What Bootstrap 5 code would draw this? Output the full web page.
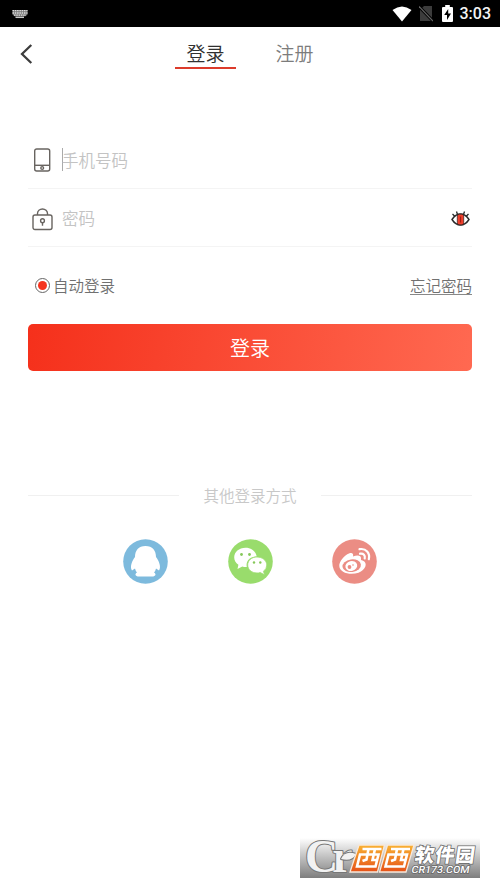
<!DOCTYPE html>
<html lang="zh-CN">
<head>
<meta charset="utf-8">
<meta name="viewport" content="width=device-width, initial-scale=1">
<title>登录</title>
<link href="https://cdn.jsdelivr.net/npm/bootstrap@5.3.0/dist/css/bootstrap.min.css" rel="stylesheet">
<style>
body{font-family:"Noto Sans CJK SC",sans-serif;background:#fff;color:#333;line-height:1;font-weight:350}
svg{display:block;flex:none}
.screen{width:500px;height:888px;overflow:hidden}
.status-bar{height:27px;background:#000;padding:0 9px 0 12px}
.wifi{margin-right:7px}
.battery{margin-left:9px}
.clock{font:500 16px/26px Roboto,sans-serif;color:#f4f4f4;margin-left:7px;padding-top:1px}
.top-bar{height:54px;padding-left:20px}
.back-btn{width:155px}
.tab-list{gap:28px}
.tab-link{width:61px;height:42px;padding-top:15px;font-size:19px;line-height:22px;text-align:center;color:#7c7c7c;text-decoration:none;white-space:nowrap}
.tab-link.current{color:#303030;border-bottom:2px solid #dc3b2b}
.login-form{padding:0 28px}
.field{height:58px;border-bottom:1px solid #f4f4f4}
.field-phone{margin-top:50px}
.field input{border:0;padding:0;background:none;font-size:16.5px;height:26px;width:300px;outline:0;font-weight:350}
.field input::placeholder{color:#c3c3c3;opacity:1}
.caret{width:1.5px;height:23px;background:#aaa;margin-left:9.5px}
.phone-input{margin-left:-1px}
.password-input{margin-left:9px}
.eye{margin-right:2px}
.options{height:20px;margin-top:28px;font-size:15.5px;line-height:20px;color:#707070}
.options a{color:#707070;border-bottom:1px solid #888;text-decoration:none;line-height:18px}
.radio-dot{width:15px;height:15px;border:1px solid #666;padding:2px;margin:0 3px 0 7px}
.radio-dot span{width:9px;height:9px;background:#f5341f}
.btn-login{height:47px;margin-top:29px;border:0;border-radius:5px;background:linear-gradient(100deg,#f5301b,#ff6951);color:#fff;font-size:20px;line-height:47px;padding:0;font-weight:350}
.divider{margin-top:114px;height:20px;font-size:15.5px;color:#c8c8c8}
.divider .caption-text{padding-top:1px}
.rule{width:151px;height:1px;background:#f0f0f0}
.socials{margin-top:34px;gap:59.5px}
.site-mark{left:300px;top:838px;overflow:visible}
</style>
<script src="https://cdn.jsdelivr.net/npm/bootstrap@5.3.0/dist/js/bootstrap.bundle.min.js"></script>
</head>
<body>
<div class="screen position-relative">
<div class="status-bar d-flex align-items-center">
  <svg width="16" height="10" viewBox="0 0 16 10"><path d="M.5 1h15v4.500l-2 1.800h-11l-2-1.800Z" fill="#777"/><path d="M.5 1.700h15M.5 4h15M2 6.200h12" stroke="#ddd" stroke-width="1.300" stroke-dasharray="1.500 .8"/><path d="M3.500 8.300h8.500" stroke="#ccc" stroke-width="1.500"/></svg>
  <svg class="wifi ms-auto" width="20" height="16" viewBox="0 0 20 16"><path d="M.5 4Q10-3 19.500 4L10 15.500Z" fill="#fff"/></svg>
  <svg width="14" height="17" viewBox="0 0 14 17"><path d="M5 1h8v15H1V5Z" fill="#3c3c3c"/><path d="M0 1.500 14 16" stroke="#000" stroke-width="3"/><path d="M0 1.500 14 16" stroke="#666" stroke-width="1.200"/></svg>
  <svg class="battery" width="11" height="17" viewBox="0 0 11 17"><path d="M3.200 0h4.600v2H10q1 0 1 1v13q0 1-1 1H1q-1 0-1-1V3q0-1 1-1h2.200Z" fill="#fff"/><path d="M6.200 4 2.200 10H5v5l4-6.500H6.200Z" fill="#000"/></svg>
  <span class="clock">3:03</span>
</div>
<header class="top-bar d-flex">
  <a class="back-btn d-flex align-items-center" href="#" aria-label="返回"><svg width="13" height="20" viewBox="0 0 13 20"><path d="M11.300 1 2 10l9.300 9" fill="none" stroke="#3d3d3d" stroke-width="2.300"/></svg></a>
  <nav class="tab-list d-flex"><a class="tab-link current" href="#">登录</a><a class="tab-link" href="#">注册</a></nav>
</header>
<form class="login-form">
  <div class="field field-phone d-flex align-items-center">
    <svg class="ms-1" width="20" height="24" viewBox="0 0 20 24" fill="none" stroke="#686460" stroke-width="1.400"><rect x="2.700" y="1" width="15" height="22" rx="2"/><path d="M3 17.300h15"/><circle cx="10.200" cy="20" r="1.400"/></svg>
    <span class="caret"></span><input class="phone-input" type="text" placeholder="手机号码" aria-label="手机号码">
  </div>
  <div class="field d-flex align-items-center">
    <svg class="ms-1 mt-1" width="21" height="23" viewBox="0 0 21 23" fill="none" stroke="#686460" stroke-width="1.400"><rect x="1" y="7" width="19" height="14.500" rx="2"/><path d="M5.500 7V5.500a5 4.500 0 0 1 10 0V7M10.500 14.500v3.200"/><circle cx="10.500" cy="12.700" r="1.900"/></svg>
    <input class="password-input" type="password" placeholder="密码" aria-label="密码">
    <svg class="eye ms-auto" width="19" height="16" viewBox="0 0 19 16"><path d="M1 9.500Q4.500 4 9.500 4T18 9.500Q14.500 15 9.500 15T1 9.500Z" fill="#fff" stroke="#292929" stroke-width="1.400"/><rect x="6.300" y="4.200" width="6.400" height="10.600" rx="2" fill="#f0402d" stroke="#442522" stroke-width=".8"/><path d="M9.500 6.500v6" stroke="#a51c13" stroke-width="1.200"/><path d="M1.500 4l2.500 2.500M5.500 1.500l1 3M13.500 1.500l-1 3M17.500 4 15 6.500" stroke="#292929" stroke-width="1.300"/></svg>
  </div>
  <div class="options d-flex align-items-center">
    <span class="radio-dot rounded-circle d-flex"><span class="rounded-circle"></span></span><span>自动登录</span>
    <a class="ms-auto" href="#">忘记密码</a>
  </div>
  <button type="button" class="btn btn-login w-100 d-block">登录</button>
  <div class="divider d-flex align-items-center justify-content-between"><span class="rule"></span><span class="caption-text">其他登录方式</span><span class="rule"></span></div>
  <div class="socials d-flex justify-content-center">
    <svg width="45" height="45" viewBox="0 0 45 45"><circle cx="22.500" cy="22.500" r="22.300" fill="#7dbadd"/><path d="M22.500 7C15.500 7 12 11.500 12 18C9 22 6.500 28 9 31.500L12 29.500Q12.500 32 14 33.500C11.500 34.800 12 37.500 16 37.500H29C33 37.500 33.500 34.800 31 33.500Q32.500 32 33 29.500L36 31.500C38.500 28 36 22 33 18C33 11.500 29.500 7 22.500 7Z" fill="#fff"/></svg>
    <svg width="45" height="45" viewBox="0 0 45 45"><circle cx="22.500" cy="22.500" r="22.300" fill="#99dc6c"/><path d="M17.500 8.700C11 8.700 6.200 13 6.200 18.300c0 3 1.500 5.600 4.200 7.400L9.500 30l4.800-2.500q2 .6 4.500.5C17.500 22 22 17.500 28.700 17.500C27.800 12.300 23.500 8.700 17.500 8.700Z" fill="#fff"/><path d="M29 18c-5.300 0-9.300 3.500-9.300 8s4 8 9.300 8q1.800 0 3.200-.5l4.300 2.300-1-3.500q3.300-2.500 3.300-6.300C38.800 21.500 34.300 18 29 18Z" fill="#fff" stroke="#99dc6c" stroke-width=".8"/><g fill="#86c85a"><circle cx="13.500" cy="15.500" r="1.400"/><circle cx="21.500" cy="15.500" r="1.400"/><circle cx="26" cy="23.500" r="1.200"/><circle cx="32.300" cy="23.500" r="1.200"/></g></svg>
    <svg width="45" height="45" viewBox="0 0 45 45"><circle cx="22.500" cy="22.500" r="22.300" fill="#eb8d84"/><path d="M17 14.500c3-1.200 4.800 0 4 3 4-1.500 8.500-1.500 8 2.200-.2 1.200.1 1.300 1.500 1.800 6 2.300 3 9.700-4 12.200-8.500 3-19-.2-19.200-6.700C7 22.500 12.500 16.200 17 14.500Z" fill="#fff"/><ellipse cx="19.700" cy="26.700" rx="9.300" ry="6.300" transform="rotate(-8 19.700 26.700)" fill="#eb8d84"/><ellipse cx="19.300" cy="27" rx="6" ry="4.800" transform="rotate(-15 19.300 27)" fill="#fff"/><circle cx="17.500" cy="28" r="1.900" fill="#eb8d84"/><circle cx="21" cy="26" r=".8" fill="#eb8d84"/><path d="M27.500 10.200c6.500-1.200 10.800 3.800 9.300 10M28 14.700c3.500-.6 5.500 1.600 4.700 4.800" fill="none" stroke="#fff" stroke-width="2.200" stroke-linecap="round"/></svg>
  </div>
</form>
<svg class="site-mark position-absolute" width="180" height="40" viewBox="0 0 180 40">
  <defs><linearGradient id="shade" x2="0" y2="1"><stop stop-color="#fff"/><stop offset=".45" stop-color="#c4c4c4"/><stop offset="1" stop-color="#7e7e7e"/></linearGradient><linearGradient id="amber" x2="0" y2="1"><stop stop-color="#f9b233"/><stop offset="1" stop-color="#e65118"/></linearGradient></defs>
  <path d="M0 0h180v40H0Z" fill="url(#shade)"/>
  <g fill="#f2f2f2" stroke="#777" stroke-width="2" paint-order="stroke" stroke-linejoin="round"><text x="5" y="34" font-family="Liberation Serif,serif" font-weight="700" font-size="46" letter-spacing="-6">Cr</text><path d="M41 21Q45 12 56 16Q52 24 41 21Z"/></g>
  <path d="M59 7h25.500l-7 27H50Z M87.500 7H114l-8 27H79.500Z" fill="url(#amber)" stroke="#f8e9dc" stroke-width="1.300"/>
  <g fill="none" stroke="#fff" stroke-width="2.600"><path id="west" d="M62.500 11h19M60 16.500h18.500L75.500 28.500h-18.500ZM68.500 11l-2 10.500-4 1.500M75 11l-2.500 11h4"/><use href="#west" x="28.500"/></g>
  <text transform="translate(114 23.500) skewX(-8)" font-size="19.500" font-weight="900" textLength="60" fill="#fff" stroke="#666" stroke-width="1.500" paint-order="stroke">软件园</text>
  <text transform="translate(111 34.500) skewX(-10)" font-family="Roboto" font-size="10" font-weight="500" textLength="58" lengthAdjust="spacingAndGlyphs" fill="#fff" stroke="#666" stroke-width="1.500" paint-order="stroke">CR173.COM</text>
</svg>
</div>
</body>
</html>
